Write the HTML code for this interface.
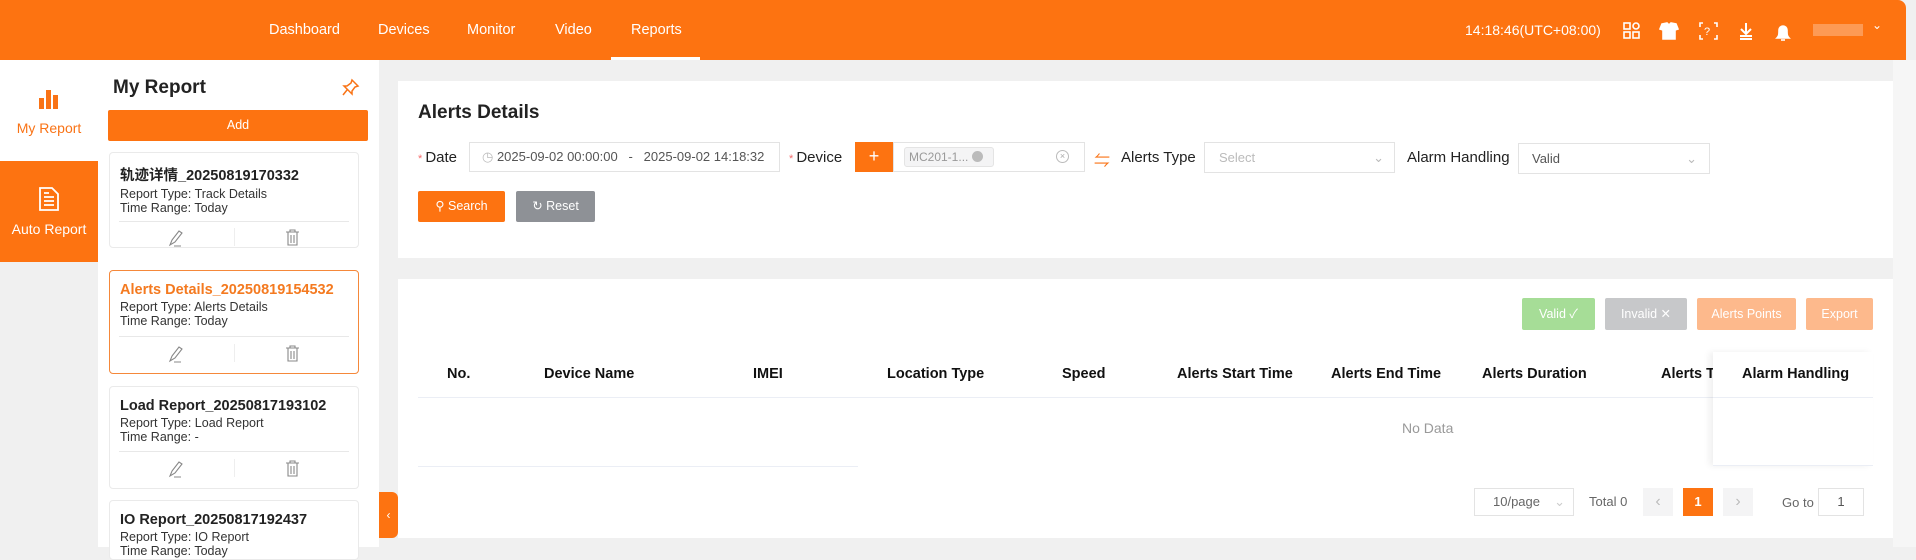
<!DOCTYPE html>
<html><head><meta charset="utf-8"><style>
*{box-sizing:border-box;margin:0;padding:0}
body{width:1916px;height:547px;overflow:hidden;background:#f0f0f0;font-family:"Liberation Sans","Noto Sans CJK SC",sans-serif;position:relative;color:#333}
.a{position:absolute}
.hdr{left:0;top:0;width:1906px;height:60px;background:#fd7311;border-top-right-radius:8px}
.nav{top:0;height:60px;line-height:60px;color:#fff;font-size:14.5px}
.card{background:#fff;border:1px solid #eaeaea;border-radius:4px;padding:11px 0 0 10px}
.card b{display:block;font-size:14.5px;color:#222;margin-bottom:2px}
.card div{font-size:12.5px;line-height:14px;color:#333}
.lbl{font-size:15px;color:#222}
.box{border:1px solid #e3e3e3;background:#fff}
.th{top:366px;font-size:14.5px;font-weight:bold;color:#111}
.btn{color:#fff;font-size:12.5px;text-align:center;border-radius:2px}
</style></head><body>
<div class="a hdr"></div>
<div class="a nav" style="left:269px">Dashboard</div>
<div class="a nav" style="left:378px">Devices</div>
<div class="a nav" style="left:467px">Monitor</div>
<div class="a nav" style="left:555px">Video</div>
<div class="a nav" style="left:631px">Reports</div>
<div class="a" style="left:611px;top:57px;width:89px;height:3px;background:#fff"></div>
<div class="a nav" style="left:1465px;font-size:14px">14:18:46(UTC+08:00)</div>
<svg class="a" style="left:1622px;top:20px" width="180" height="22" fill="none" stroke="#fff" stroke-width="1.6">
<rect x="2" y="3" width="6" height="6"/><rect x="11" y="3" width="6" height="6" rx="3"/><rect x="2" y="12" width="6" height="6"/><rect x="11" y="12" width="6" height="6"/>
<path d="M40 4l5-1 2 2 2-2 5 1 2 5-3 1v9h-12v-9l-3-1z" fill="#fff"/>
<path d="M81 3h-3v4M92 3h3v4M81 19h-3v-4M92 19h3v-4" /><text x="82" y="15" fill="#fff" stroke="none" font-size="11" font-family="Liberation Sans">?</text>
<path d="M124 3v10M119 9l5 5 5-5M118 16h12M118 19h12" stroke-width="2"/>
<path d="M163 18h-8c2-2 2-4 2-8a4 4 0 018 0c0 4 0 6 2 8z" fill="#fff"/><path d="M159 20h4"/>
</svg>
<div class="a" style="left:1813px;top:24px;width:50px;height:12px;background:#fd9a55"></div>
<div class="a" style="left:1872px;top:18px;color:#fff;font-size:12px">&#8964;</div>

<div class="a" style="left:0;top:60px;width:98px;height:101px;background:#fff"></div>
<svg class="a" style="left:38px;top:88px" width="22" height="22" fill="#f97316"><rect x="1" y="10" width="5" height="11"/><rect x="8" y="2" width="5" height="19"/><rect x="15" y="7" width="5" height="14"/></svg>
<div class="a" style="left:0;top:120px;width:98px;text-align:center;color:#f97316;font-size:14px">My Report</div>
<div class="a" style="left:0;top:161px;width:98px;height:101px;background:#fd7311"></div>
<svg class="a" style="left:38px;top:186px" width="22" height="26" fill="none" stroke="#fff" stroke-width="1.8"><path d="M2 2h12l6 6v16h-18z M6 11h10M6 15h10M6 19h10M6 7h5"/></svg>
<div class="a" style="left:0;top:221px;width:98px;text-align:center;color:#fff;font-size:14px">Auto Report</div>

<div class="a" style="left:98px;top:60px;width:281px;height:487px;background:#fff"></div>
<div class="a" style="left:113px;top:77px;font-size:19px;font-weight:bold;color:#222">My Report</div>
<svg class="a" style="left:342px;top:78px" width="18" height="18" fill="none" stroke="#f97316" stroke-width="1.5"><path d="M10 2l6 6-3 1-3 4 0 3-8-8 3 0 4-3z M5 12l-4 5"/></svg>
<div class="a btn" style="left:108px;top:110px;width:260px;height:31px;line-height:31px;background:#fd7311">Add</div>

<div class="a card" style="left:109px;top:152px;width:250px;height:96px"><b>轨迹详情_20250819170332</b><div>Report Type: Track Details</div><div>Time Range: Today</div></div>
<div class="a card" style="left:109px;top:270px;width:250px;height:104px;border-color:#f5883a"><b style="color:#f47a20">Alerts Details_20250819154532</b><div>Report Type: Alerts Details</div><div>Time Range: Today</div></div>
<div class="a card" style="left:109px;top:386px;width:250px;height:103px"><b>Load Report_20250817193102</b><div>Report Type: Load Report</div><div>Time Range: -</div></div>
<div class="a card" style="left:109px;top:500px;width:250px;height:60px"><b>IO Report_20250817192437</b><div>Report Type: IO Report</div><div>Time Range: Today</div></div>
<div class="a" style="left:119px;top:221px;width:230px;height:1px;background:#e8e8e8"></div>
<div class="a" style="left:119px;top:336px;width:230px;height:1px;background:#e8e8e8"></div>
<div class="a" style="left:119px;top:451px;width:230px;height:1px;background:#e8e8e8"></div>
<div class="a" style="left:234px;top:228px;width:1px;height:18px;background:#eee"></div>
<div class="a" style="left:234px;top:344px;width:1px;height:18px;background:#eee"></div>
<div class="a" style="left:234px;top:459px;width:1px;height:18px;background:#eee"></div>
<svg class="a" style="left:0;top:0" width="380" height="547" fill="none" stroke="#888" stroke-width="1.1">
<g id="r1"><path d="M170 245l2-5 7-9 3 2-7 9-5 3zM174 246h7"/><path d="M286 232h13M290 232v-2h5v2M288 232v13h9v-13M291 235v8M294 235v8"/></g>
<g transform="translate(0,116)"><path d="M170 245l2-5 7-9 3 2-7 9-5 3zM174 246h7"/><path d="M286 232h13M290 232v-2h5v2M288 232v13h9v-13M291 235v8M294 235v8"/></g>
<g transform="translate(0,231)"><path d="M170 245l2-5 7-9 3 2-7 9-5 3zM174 246h7"/><path d="M286 232h13M290 232v-2h5v2M288 232v13h9v-13M291 235v8M294 235v8"/></g>
</svg>
<div class="a" style="left:379px;top:492px;width:19px;height:46px;background:#fd7311;border-radius:0 6px 6px 0;color:#fff;font-size:12px;line-height:46px;text-align:center">&lsaquo;</div>

<div class="a" style="left:1893px;top:60px;width:23px;height:487px;background:#f6f6f6"></div>
<div class="a" style="left:398px;top:81px;width:1495px;height:177px;background:#fff"></div>
<div class="a" style="left:418px;top:102px;font-size:19px;font-weight:bold;color:#222">Alerts Details</div>
<div class="a lbl" style="left:418px;top:149px"><span style="color:#f56c6c;font-size:11px">* </span>Date</div>
<div class="a box" style="left:469px;top:142px;width:311px;height:30px;font-size:13px;color:#555;line-height:28px;padding-left:12px"><span style="color:#bbb">◷</span> 2025-09-02 00:00:00 &nbsp;&nbsp;- &nbsp;&nbsp;2025-09-02 14:18:32</div>
<div class="a lbl" style="left:789px;top:149px"><span style="color:#f56c6c;font-size:11px">* </span>Device</div>
<div class="a" style="left:855px;top:142px;width:38px;height:30px;background:#fd7311;color:#fff;text-align:center;line-height:29px;font-size:18px">+</div>
<div class="a box" style="left:893px;top:142px;width:192px;height:30px"></div>
<div class="a" style="left:904px;top:147px;width:90px;height:20px;background:#f4f4f5;border:1px solid #e4e4e4;border-radius:3px;font-size:12px;color:#999;line-height:18px;padding-left:4px">MC201-1... <span style="display:inline-block;width:11px;height:11px;border-radius:50%;background:#bbb;vertical-align:-1px"></span></div>
<div class="a" style="left:1056px;top:150px;width:13px;height:13px;border:1px solid #bbb;border-radius:50%;font-size:9px;color:#aaa;text-align:center;line-height:11px">×</div>
<div class="a" style="left:1094px;top:147px;color:#f97316;font-size:16px">⇋</div>
<div class="a lbl" style="left:1121px;top:149px">Alerts Type</div>
<div class="a box" style="left:1204px;top:142px;width:191px;height:31px;font-size:13px;color:#bbb;line-height:30px;padding-left:14px">Select<span style="position:absolute;right:10px">&#8964;</span></div>
<div class="a lbl" style="left:1407px;top:149px">Alarm Handling</div>
<div class="a box" style="left:1518px;top:143px;width:192px;height:31px;font-size:13px;color:#555;line-height:30px;padding-left:13px">Valid<span style="position:absolute;right:12px;color:#bbb">&#8964;</span></div>
<div class="a btn" style="left:418px;top:191px;width:87px;height:31px;line-height:31px;background:#fd7311;font-size:12.5px">&#9906; Search</div>
<div class="a btn" style="left:516px;top:191px;width:79px;height:31px;line-height:31px;background:#8e9196">&#8635; Reset</div>

<div class="a" style="left:398px;top:279px;width:1495px;height:259px;background:#fff"></div>
<div class="a btn" style="left:1522px;top:298px;width:73px;height:32px;line-height:32px;background:#a6dd97">Valid ✓</div>
<div class="a btn" style="left:1605px;top:298px;width:82px;height:32px;line-height:32px;background:#c7c8ca">Invalid ✕</div>
<div class="a btn" style="left:1697px;top:298px;width:99px;height:32px;line-height:32px;background:#fdb98c">Alerts Points</div>
<div class="a btn" style="left:1806px;top:298px;width:67px;height:32px;line-height:32px;background:#fdb98c">Export</div>
<div class="a th" style="left:447px">No.</div>
<div class="a th" style="left:544px">Device Name</div>
<div class="a th" style="left:753px">IMEI</div>
<div class="a th" style="left:887px">Location Type</div>
<div class="a th" style="left:1062px">Speed</div>
<div class="a th" style="left:1177px">Alerts Start Time</div>
<div class="a th" style="left:1331px">Alerts End Time</div>
<div class="a th" style="left:1482px">Alerts Duration</div>
<div class="a th" style="left:1661px;width:52px;overflow:hidden;white-space:nowrap">Alerts Type</div>
<div class="a" style="left:418px;top:397px;width:1455px;height:1px;background:#ebeef5"></div>
<div class="a" style="left:1713px;top:352px;width:160px;height:114px;background:#fff;box-shadow:-4px 0 6px rgba(0,0,0,.06);border-bottom:1px solid #ebeef5"></div>
<div class="a" style="left:1713px;top:397px;width:160px;height:1px;background:#ebeef5"></div>
<div class="a th" style="left:1742px">Alarm Handling</div>
<div class="a" style="left:1402px;top:420px;font-size:14px;color:#999">No Data</div>
<div class="a" style="left:418px;top:466px;width:440px;height:1px;background:#ebeef5"></div>
<div class="a box" style="left:1474px;top:488px;width:100px;height:28px;font-size:13px;color:#666;line-height:26px;padding-left:18px">10/page<span style="position:absolute;right:8px;color:#ccc">&#8964;</span></div>
<div class="a" style="left:1589px;top:494px;font-size:13px;color:#666">Total 0</div>
<div class="a" style="left:1643px;top:488px;width:30px;height:28px;background:#f4f4f5;color:#bbb;text-align:center;line-height:28px">&lsaquo;</div>
<div class="a" style="left:1683px;top:488px;width:30px;height:28px;background:#fd7311;color:#fff;text-align:center;line-height:28px;font-size:13px;font-weight:bold">1</div>
<div class="a" style="left:1723px;top:488px;width:30px;height:28px;background:#f4f4f5;color:#bbb;text-align:center;line-height:28px">&rsaquo;</div>
<div class="a" style="left:1782px;top:495px;font-size:13px;color:#666">Go to</div>
<div class="a box" style="left:1818px;top:488px;width:46px;height:28px;font-size:13px;color:#555;line-height:26px;text-align:center">1</div>
</body></html>
